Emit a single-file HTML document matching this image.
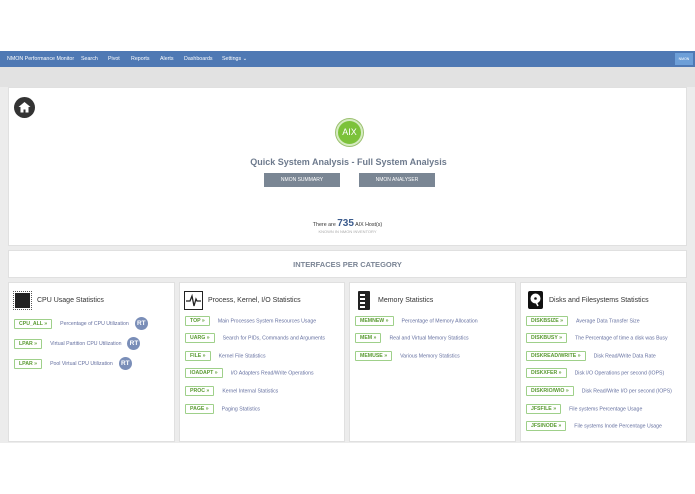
<!DOCTYPE html>
<html><head><meta charset="utf-8"><style>
*{margin:0;padding:0;box-sizing:border-box}
body{width:695px;height:494px;background:#fff;font-family:"Liberation Sans",sans-serif;position:relative;overflow:hidden}
.nav{position:absolute;left:0;top:51px;width:695px;height:16px;background:#4f79b4;color:#fff;font-size:5.3px}
.nav span{position:absolute;top:5px}
.logo{position:absolute;right:2px;top:2px;width:18px;height:12px;background:#6d9fd8;font-size:3.5px;text-align:center;line-height:12px}
.bg{position:absolute;left:0;top:67px;width:695px;height:376px;background:#ececec}
.bar{position:absolute;left:0;top:67px;width:695px;height:20px;background:#e2e2e2}
.p{position:absolute;background:#fff;border:1px solid #e0e0e0}
.btn{position:absolute;top:173px;height:14px;background:#7a8694;color:#fff;font-size:5px;text-align:center;line-height:14px}
.t{position:absolute;font-size:7px;color:#333;left:28px;top:14px}
.row{position:absolute;left:5px;height:10px;font-size:5.2px;color:#6570a0;white-space:nowrap}
.tag{display:inline-block;border:1px solid #9fd08a;color:#5a9a32;font-weight:bold;padding:0 4px;height:10px;line-height:9px;border-radius:1px;margin-right:8px;vertical-align:middle}
.rt{display:inline-block;width:13px;height:13px;border-radius:50%;background:#7a8eb8;color:#fff;font-weight:bold;font-size:6.5px;line-height:13px;text-align:center;margin-left:6px;vertical-align:middle}
</style></head><body>
<div class="nav"><span style="left:7px">NMON Performance Monitor</span><span style="left:81px">Search</span><span style="left:108px">Pivot</span><span style="left:131px">Reports</span><span style="left:160px">Alerts</span><span style="left:184px">Dashboards</span><span style="left:222px">Settings ⌄</span><div class="logo">NMON</div></div>
<div class="bg"></div><div class="bar"></div>
<div class="p" style="left:8px;top:87px;width:679px;height:159px">
<div style="position:absolute;left:5px;top:9px;width:21px;height:21px;border-radius:50%;background:#333"><svg width="21" height="21" viewBox="0 0 21 21"><path d="M10.5 5 L4.5 10 H6.5 V15.5 H9.5 V12.5 H11.5 V15.5 H14.5 V10 H16.5Z" fill="#fff"/></svg></div>
<div style="position:absolute;left:327px;top:31px;width:27px;height:27px;border-radius:50%;background:#7cc23a;border:2px solid #d6ecc2;box-shadow:0 0 0 1px #9cc070;color:#fff;font-size:9px;text-align:center;line-height:23px">AIX</div>
<div style="position:absolute;left:0;width:679px;top:69px;text-align:center;font-size:9px;font-weight:bold;color:#6d7a8d">Quick System Analysis - Full System Analysis</div>
</div>
<div class="btn" style="left:264px;width:76px">NMON SUMMARY</div>
<div class="btn" style="left:359px;width:76px">NMON ANALYSER</div>
<div style="position:absolute;left:0;width:695px;top:218px;text-align:center;font-size:5.3px;color:#333">There are <b style="font-size:10px;color:#3a5a8c">735</b> AIX Host(s)</div>
<div style="position:absolute;left:0;width:695px;top:229px;text-align:center;font-size:4px;color:#aaa">KNOWN IN NMON INVENTORY</div>
<div class="p" style="left:8px;top:250px;width:679px;height:28px;text-align:center;font-size:7.5px;font-weight:bold;color:#7a8494;line-height:27px">INTERFACES PER CATEGORY</div>

<div class="p" style="left:8px;top:282px;width:167px;height:160px">
<div style="position:absolute;left:6px;top:10px;width:15px;height:15px;background:#222;outline:1px dotted #555;outline-offset:1px"></div>
<div class="t">CPU Usage Statistics</div>
<div class="row" style="top:34px"><span class="tag">CPU_ALL »</span>Percentage of CPU Utilization<span class="rt">RT</span></div>
<div class="row" style="top:54px"><span class="tag">LPAR »</span>Virtual Partition CPU Utilization<span class="rt">RT</span></div>
<div class="row" style="top:74px"><span class="tag">LPAR »</span>Pool Virtual CPU Utilization<span class="rt">RT</span></div>
</div>
<div class="p" style="left:179px;top:282px;width:166px;height:160px">
<svg style="position:absolute;left:4px;top:8px" width="19" height="19"><rect x="0.5" y="0.5" width="18" height="18" fill="#fff" stroke="#222"/><path d="M2 10H6L8 5L10 15L12 8L13 10H17" stroke="#222" fill="none" stroke-width="1.3"/></svg>
<div class="t">Process, Kernel, I/O Statistics</div>
<div class="row" style="top:33px"><span class="tag">TOP »</span>Main Processes System Resources Usage</div>
<div class="row" style="top:50px"><span class="tag">UARG »</span>Search for PIDs, Commands and Arguments</div>
<div class="row" style="top:68px"><span class="tag">FILE »</span>Kernel File Statistics</div>
<div class="row" style="top:85px"><span class="tag">IOADAPT »</span>I/O Adapters Read/Write Operations</div>
<div class="row" style="top:103px"><span class="tag">PROC »</span>Kernel Internal Statistics</div>
<div class="row" style="top:121px"><span class="tag">PAGE »</span>Paging Statistics</div>
</div>
<div class="p" style="left:349px;top:282px;width:167px;height:160px">
<svg style="position:absolute;left:7px;top:8px" width="14" height="19"><rect x="1" y="0" width="12" height="19" rx="1" fill="#222"/><rect x="3" y="3" width="5" height="2" fill="#fff"/><rect x="3" y="7" width="5" height="2" fill="#fff"/><rect x="3" y="11" width="5" height="2" fill="#fff"/><rect x="3" y="15" width="5" height="2" fill="#fff"/></svg>
<div class="t">Memory Statistics</div>
<div class="row" style="top:33px"><span class="tag">MEMNEW »</span>Percentage of Memory Allocation</div>
<div class="row" style="top:50px"><span class="tag">MEM »</span>Real and Virtual Memory Statistics</div>
<div class="row" style="top:68px"><span class="tag">MEMUSE »</span>Various Memory Statistics</div>
</div>
<div class="p" style="left:520px;top:282px;width:167px;height:160px">
<svg style="position:absolute;left:7px;top:8px" width="15" height="18"><rect x="0" y="0" width="15" height="18" rx="2" fill="#111"/><circle cx="7.5" cy="7.5" r="5" fill="#fff"/><circle cx="7.5" cy="7.5" r="1.3" fill="#111"/><path d="M7 9L10 15" stroke="#fff" stroke-width="1.5"/></svg>
<div class="t">Disks and Filesystems Statistics</div>
<div class="row" style="top:33px"><span class="tag">DISKBSIZE »</span>Average Data Transfer Size</div>
<div class="row" style="top:50px"><span class="tag">DISKBUSY »</span>The Percentage of time a disk was Busy</div>
<div class="row" style="top:68px"><span class="tag">DISKREAD/WRITE »</span>Disk Read/Write Data Rate</div>
<div class="row" style="top:85px"><span class="tag">DISKXFER »</span>Disk I/O Operations per second (IOPS)</div>
<div class="row" style="top:103px"><span class="tag">DISKRIO/WIO »</span>Disk Read/Write I/O per second (IOPS)</div>
<div class="row" style="top:121px"><span class="tag">JFSFILE »</span>File systems Percentage Usage</div>
<div class="row" style="top:138px"><span class="tag">JFSINODE »</span>File systems Inode Percentage Usage</div>
</div>
</body></html>
